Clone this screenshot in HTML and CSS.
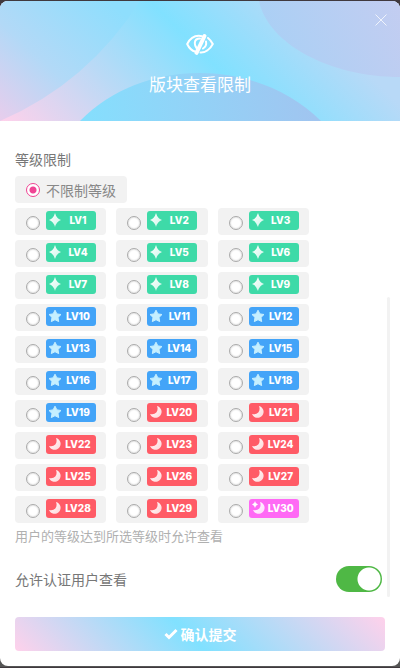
FILE: index.html
```html
<!DOCTYPE html>
<html lang="zh-CN">
<head>
<meta charset="utf-8">
<meta name="viewport" content="width=device-width, initial-scale=1">
<title>版块查看限制</title>
<link rel="stylesheet" href="styles.css">
</head>
<body>
<svg class="sprite" aria-hidden="true">
  <defs>
    <linearGradient id="icon-shade" x1="0" y1="0" x2="1" y2="1"><stop offset="0" stop-color="#fff"/><stop offset="1" stop-color="#fff" stop-opacity=".75"/></linearGradient>
    <symbol id="spark" viewBox="0 0 14 14"><path fill="url(#icon-shade)" d="M7 0Q8.500 5.500 13 7Q8.500 8.500 7 14Q5.500 8.500 1 7Q5.500 5.500 7 0Z"/></symbol>
    <symbol id="star" viewBox="0 0 14 14"><path fill="#c5efff" stroke="#c5efff" stroke-linejoin="round" d="M7 1.200L8.900 4.900L13 5.500L10 8.400L10.700 12.600L7 10.700L3.300 12.600L4 8.400L1 5.500L5.100 4.900Z"/></symbol>
    <symbol id="moon" viewBox="0 0 14 14"><path fill="url(#icon-shade)" d="M8 1A6 6 0 1 1 1 9Q5 10 7.300 7.500Q9.500 4.500 8 1Z"/></symbol>
    <symbol id="moon-spark" viewBox="0 0 14 14"><path fill="url(#icon-shade)" d="M9 1A6 6 0 1 1 2 9Q6 10 8.300 7.500Q10.500 4.500 9 1Z"/><path fill="#fff" d="M4 0Q4.500 3 7 3.500Q4.500 4 4 7Q3.500 4 1 3.500Q3.500 3 4 0Z"/></symbol>
  </defs>
</svg>
<form class="modal">
  <header class="modal-head">
    <svg class="head-art" viewBox="0 0 400 120" preserveAspectRatio="none" aria-hidden="true">
      <defs>
        <linearGradient id="g-left" gradientUnits="userSpaceOnUse" x1="0" y1="120" x2="110" y2="0"><stop offset="0" stop-color="#e8cdec"/><stop offset=".45" stop-color="#b2d9f7"/><stop offset="1" stop-color="#8edefd"/></linearGradient>
        <linearGradient id="g-right" gradientUnits="userSpaceOnUse" x1="270" y1="60" x2="400" y2="0"><stop offset="0" stop-color="#a9d0f5"/><stop offset="1" stop-color="#c3cdf1"/></linearGradient>
        <linearGradient id="g-hill" gradientUnits="userSpaceOnUse" x1="90" y1="120" x2="310" y2="90"><stop offset="0" stop-color="#86defd"/><stop offset="1" stop-color="#a0c5f0"/></linearGradient>
      </defs>
      <path fill="url(#g-left)" d="M0 0H140Q88 82 0 120Z"/>
      <path fill="url(#g-right)" d="M259 0C268 43 330 76 400 76V0Z"/>
      <path fill="url(#g-hill)" d="M80 120C142 56 256 56 321 120Z"/>
    </svg>
    <button class="close" type="button" aria-label="关闭"><svg viewBox="0 0 12 12"><path d="M.5 .5L11.500 11.500M11.500 .5L.5 11.500"/></svg></button>
    <svg class="eye" viewBox="0 0 30 24" aria-hidden="true">
      <path d="M17 4.200C9 2.500 4.500 7.500 2.200 12C4 16 7 18.800 10.500 19.800M23 6Q26 8.500 27.800 12C25 17.500 20 20.800 15.500 20.500"/>
      <path d="M15 6.500Q10 6.500 9.800 11Q9.800 14 11.500 16M21 9.500Q22 14 18 16.500"/>
      <path class="slash" d="M19.500 4L11.500 20.800"/>
    </svg>
    <h1>版块查看限制</h1>
  </header>
  <div class="modal-body">
    <fieldset>
      <legend>等级限制</legend>
      <label class="option any"><input type="radio" name="level" value="0" checked><span>不限制等级</span></label>
      <div class="levels">
        <label class="option"><input type="radio" name="level"><span class="badge green"><svg><use href="#spark"/></svg><b>LV1</b></span></label>
        <label class="option"><input type="radio" name="level"><span class="badge green"><svg><use href="#spark"/></svg><b>LV2</b></span></label>
        <label class="option"><input type="radio" name="level"><span class="badge green"><svg><use href="#spark"/></svg><b>LV3</b></span></label>
        <label class="option"><input type="radio" name="level"><span class="badge green"><svg><use href="#spark"/></svg><b>LV4</b></span></label>
        <label class="option"><input type="radio" name="level"><span class="badge green"><svg><use href="#spark"/></svg><b>LV5</b></span></label>
        <label class="option"><input type="radio" name="level"><span class="badge green"><svg><use href="#spark"/></svg><b>LV6</b></span></label>
        <label class="option"><input type="radio" name="level"><span class="badge green"><svg><use href="#spark"/></svg><b>LV7</b></span></label>
        <label class="option"><input type="radio" name="level"><span class="badge green"><svg><use href="#spark"/></svg><b>LV8</b></span></label>
        <label class="option"><input type="radio" name="level"><span class="badge green"><svg><use href="#spark"/></svg><b>LV9</b></span></label>
        <label class="option"><input type="radio" name="level"><span class="badge blue"><svg><use href="#star"/></svg><b>LV10</b></span></label>
        <label class="option"><input type="radio" name="level"><span class="badge blue"><svg><use href="#star"/></svg><b>LV11</b></span></label>
        <label class="option"><input type="radio" name="level"><span class="badge blue"><svg><use href="#star"/></svg><b>LV12</b></span></label>
        <label class="option"><input type="radio" name="level"><span class="badge blue"><svg><use href="#star"/></svg><b>LV13</b></span></label>
        <label class="option"><input type="radio" name="level"><span class="badge blue"><svg><use href="#star"/></svg><b>LV14</b></span></label>
        <label class="option"><input type="radio" name="level"><span class="badge blue"><svg><use href="#star"/></svg><b>LV15</b></span></label>
        <label class="option"><input type="radio" name="level"><span class="badge blue"><svg><use href="#star"/></svg><b>LV16</b></span></label>
        <label class="option"><input type="radio" name="level"><span class="badge blue"><svg><use href="#star"/></svg><b>LV17</b></span></label>
        <label class="option"><input type="radio" name="level"><span class="badge blue"><svg><use href="#star"/></svg><b>LV18</b></span></label>
        <label class="option"><input type="radio" name="level"><span class="badge blue"><svg><use href="#star"/></svg><b>LV19</b></span></label>
        <label class="option"><input type="radio" name="level"><span class="badge red"><svg><use href="#moon"/></svg><b>LV20</b></span></label>
        <label class="option"><input type="radio" name="level"><span class="badge red"><svg><use href="#moon"/></svg><b>LV21</b></span></label>
        <label class="option"><input type="radio" name="level"><span class="badge red"><svg><use href="#moon"/></svg><b>LV22</b></span></label>
        <label class="option"><input type="radio" name="level"><span class="badge red"><svg><use href="#moon"/></svg><b>LV23</b></span></label>
        <label class="option"><input type="radio" name="level"><span class="badge red"><svg><use href="#moon"/></svg><b>LV24</b></span></label>
        <label class="option"><input type="radio" name="level"><span class="badge red"><svg><use href="#moon"/></svg><b>LV25</b></span></label>
        <label class="option"><input type="radio" name="level"><span class="badge red"><svg><use href="#moon"/></svg><b>LV26</b></span></label>
        <label class="option"><input type="radio" name="level"><span class="badge red"><svg><use href="#moon"/></svg><b>LV27</b></span></label>
        <label class="option"><input type="radio" name="level"><span class="badge red"><svg><use href="#moon"/></svg><b>LV28</b></span></label>
        <label class="option"><input type="radio" name="level"><span class="badge red"><svg><use href="#moon"/></svg><b>LV29</b></span></label>
        <label class="option"><input type="radio" name="level"><span class="badge violet"><svg><use href="#moon-spark"/></svg><b>LV30</b></span></label>
      </div>
      <p class="hint">用户的等级达到所选等级时允许查看</p>
    </fieldset>
    <label class="switch-row"><span>允许认证用户查看</span><input class="switch" type="checkbox" checked></label>
    <span class="scroll-thumb"></span>
  </div>
  <footer>
    <button class="submit" type="submit"><svg viewBox="0 0 14 12" aria-hidden="true"><path d="M1.500 6L5 9.500L12.500 2"/></svg>确认提交</button>
  </footer>
</form>
</body>
</html>
```
FILE: styles.css
```css
* {
  box-sizing: border-box;
}

body {
  margin: 0;
  padding: 1px 0;
  background: linear-gradient(#40393e, #555);
  color: #777;
  font: 14px/20px "Noto Sans CJK SC", sans-serif;
}

button {
  padding: 0;
  border: 0;
  font: inherit;
  cursor: pointer;
}

.sprite {
  position: absolute;
  width: 0;
  height: 0;
}

.modal {
  overflow: hidden;
  border-radius: 8px;
  background: #fff;
}

.modal-head {
  position: relative;
  display: flex;
  flex-direction: column;
  align-items: center;
  gap: 16px;
  padding: 31px 0 25px;
  background: linear-gradient(45deg, #ffd1eb, #81e1ff 52%, #b8d9f7 80%, #b8d9f7);
  color: #fff;
}

.head-art {
  position: absolute;
  inset: 0;
  width: 100%;
  height: 100%;
}

.eye {
  position: relative;
  width: 30px;
  height: 24px;
  fill: none;
  stroke: #fff;
  stroke-width: 2;
  stroke-linecap: round;
}

.eye .slash {
  stroke-width: 4;
}

h1 {
  position: relative;
  margin: 0;
  font-size: 17px;
  line-height: 24px;
  font-weight: 400;
}

.close {
  position: absolute;
  z-index: 1;
  top: 13px;
  right: 13px;
  width: 12px;
  height: 12px;
  background: none;
}

.close svg {
  display: block;
  fill: none;
  stroke: #fff;
  stroke-opacity: .75;
}

.modal-body {
  position: relative;
  padding: 28px 15px 5px;
}

fieldset {
  min-width: 0;
  margin: 0;
  padding: 0;
  border: 0;
}

legend {
  padding: 0;
  margin-bottom: 7px;
}

.option {
  display: flex;
  align-items: center;
  gap: 6px;
  height: 27px;
  padding: 0 11px;
  border-radius: 4px;
  background: #f2f2f2;
}

.any {
  width: fit-content;
  margin-bottom: 5px;
  color: #888;
}

.levels {
  display: grid;
  grid-template-columns: repeat(3, 1fr);
  gap: 5px 10px;
  max-width: 294px;
}

input[type="radio"] {
  appearance: none;
  flex: none;
  width: 14px;
  height: 14px;
  margin: 0;
  border: 1px solid #aaa;
  border-radius: 50%;
  background: #fff;
  box-shadow: inset 0 0 2px #bbb;
}

input[type="radio"]:checked {
  border-color: #f04494;
  background: radial-gradient(#f04494 3px, #fff 4px);
  box-shadow: none;
}

.badge {
  display: flex;
  align-items: center;
  width: 50px;
  height: 19px;
  margin: 0 -6px 3px 0;
  padding: 0 2px;
  border-radius: 3px;
  color: #fff;
}

.badge svg {
  flex: none;
  width: 14px;
  height: 14px;
}

.badge b {
  flex: 1;
  font: 800 10px/19px Inter, sans-serif;
  text-align: center;
}

.levels input {
  margin-top: 2px;
}

.green {
  background: #3edaa8;
}

.blue {
  background: #43a4f8;
}

.red {
  background: #ff5b66;
}

.violet {
  background: #ff69f5;
}

.hint {
  margin: 3px 0 0;
  color: #b0b0b0;
  font-size: 13px;
}

.switch-row {
  display: flex;
  align-items: center;
  justify-content: space-between;
  margin: 20px 3px 0 0;
}

.switch {
  appearance: none;
  width: 46px;
  height: 26px;
  margin: 0;
  border-radius: 13px;
  background: radial-gradient(circle at 33px 13px, #fff 11px, #4fb845 12px);
}

.scroll-thumb {
  position: absolute;
  right: 10px;
  bottom: 0;
  width: 3px;
  height: 300px;
  border-radius: 2px;
  background: #f2f2f2;
}

footer {
  padding: 20px 15px 15px;
}

.submit {
  display: flex;
  align-items: center;
  justify-content: center;
  gap: 3px;
  width: 100%;
  height: 34px;
  border-radius: 4px;
  background: linear-gradient(45deg, #ffd1eb, #81e1ff 47%, #ffd1eb);
  color: #fff;
  font-weight: 700;
}

.submit svg {
  width: 14px;
  height: 12px;
  fill: none;
  stroke: #fff;
  stroke-width: 3;
}
```
